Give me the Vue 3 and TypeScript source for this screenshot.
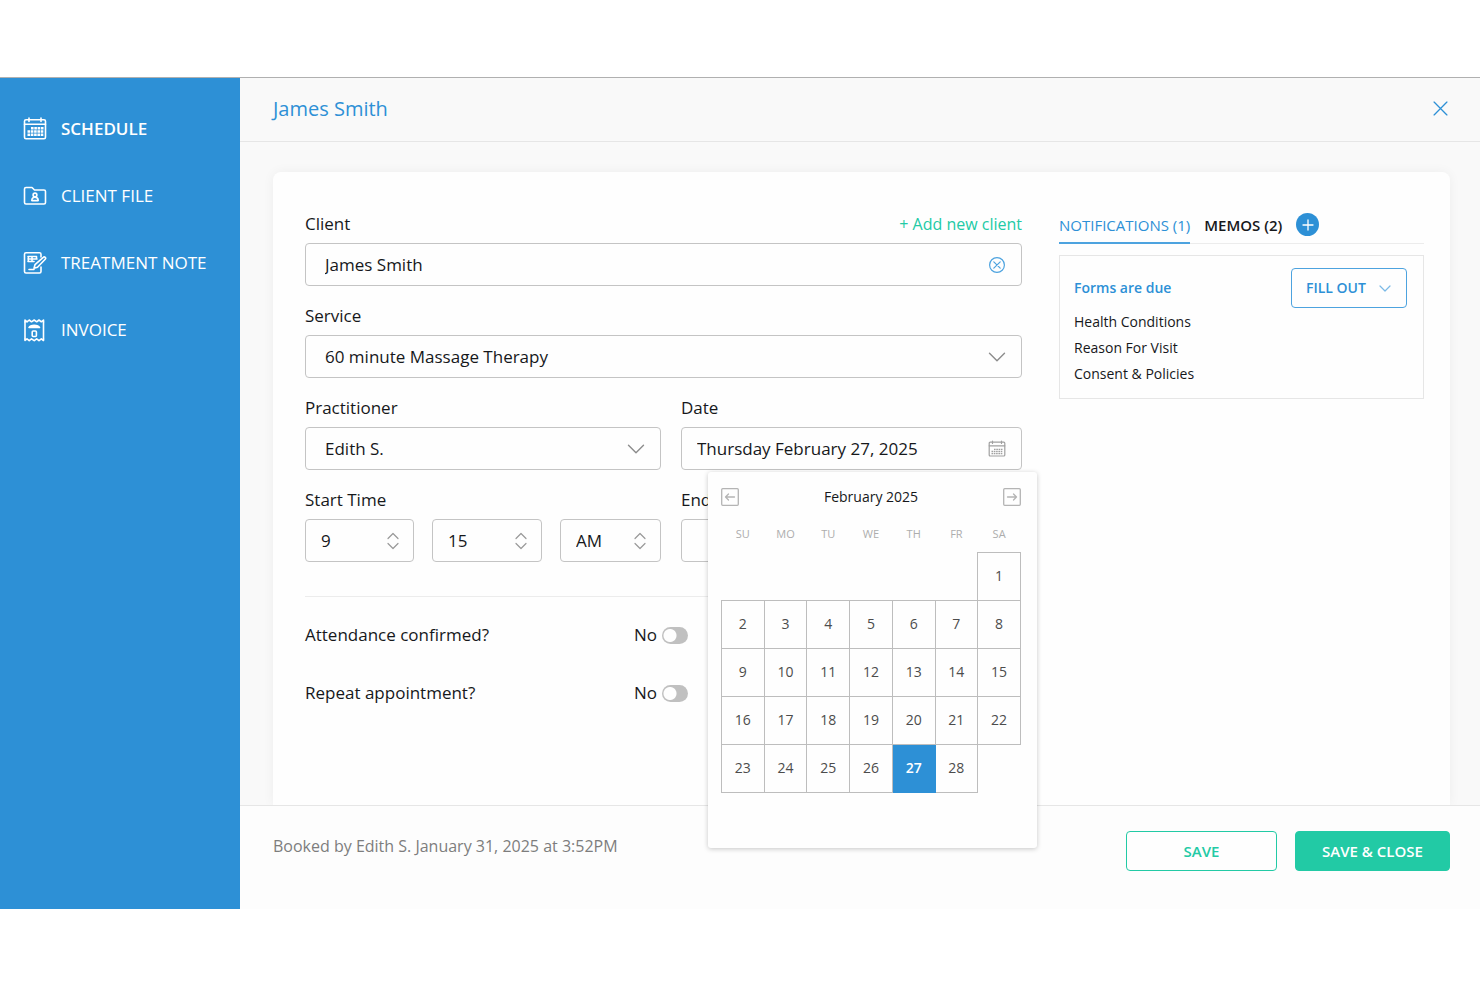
<script setup lang="ts">
import { ref } from 'vue'

interface NavItem {
  id: string
  label: string
  active: boolean
}

interface Question {
  id: string
  label: string
}

const nav: NavItem[] = [
  { id: 'schedule', label: 'SCHEDULE', active: true },
  { id: 'client', label: 'CLIENT FILE', active: false },
  { id: 'note', label: 'TREATMENT NOTE', active: false },
  { id: 'invoice', label: 'INVOICE', active: false },
]

const clientName = ref('James Smith')
const date = ref('Thursday February 27, 2025')

const start = [
  { id: 'start-hour', name: 'Start hour', value: '9' },
  { id: 'start-minute', name: 'Start minute', value: '15' },
  { id: 'start-period', name: 'Start AM or PM', value: 'AM' },
]
const end = [
  { id: 'end-hour', name: 'End hour', value: '' },
  { id: 'end-minute', name: 'End minute', value: '' },
  { id: 'end-period', name: 'End AM or PM', value: '' },
]

const questions: Question[] = [
  { id: 'attendance', label: 'Attendance confirmed?' },
  { id: 'repeat', label: 'Repeat appointment?' },
]
const answers = ref<Record<string, boolean>>({ attendance: false, repeat: false })

const forms = ['Health Conditions', 'Reason For Visit', 'Consent & Policies']

const weekdays = ['SU', 'MO', 'TU', 'WE', 'TH', 'FR', 'SA']
const firstWeekday = 6
const daysInMonth = 28
const selected = ref(27)
const weeks: (number | null)[][] = Array.from({ length: 5 }, (_, w) =>
  Array.from({ length: 7 }, (_, d) => {
    const n = w * 7 + d - firstWeekday + 1
    return n >= 1 && n <= daysInMonth ? n : null
  }),
)
</script>

<template>
  <div class="page">
    <div class="modal">
      <nav class="sidebar" aria-label="Appointment sections">
        <a v-for="item in nav" :key="item.id" href="#" class="nav-item" :class="{ active: item.active }">
          <svg class="nav-icon" viewBox="0 0 24 24" aria-hidden="true">
            <g v-if="item.id === 'schedule'">
              <rect x="1.500" y="2.800" width="21" height="19" rx="1.500" />
              <path d="M1.500 7.200h21M6 1v3.500M18 1v3.500" />
              <path class="dots" d="M8 11.300h12.500M4.500 14.500h16M4.500 17.700h16" />
            </g>
            <g v-else-if="item.id === 'client'">
              <path d="M1.500 18.500V5A1.500 1.500 0 0 1 3 3.500h6L11.500 6H21a1.500 1.500 0 0 1 1.500 1.500v11A1.500 1.500 0 0 1 21 20H3a1.500 1.500 0 0 1-1.500-1.500z" />
              <circle cx="12" cy="11" r="1.900" />
              <path d="M8.800 16.600c0-2.200 1.200-3.300 3.200-3.300s3.200 1.100 3.200 3.300z" />
            </g>
            <g v-else-if="item.id === 'note'">
              <path d="M18 6V3.200a1.500 1.500 0 0 0-1.500-1.500H3a1.500 1.500 0 0 0-1.500 1.500v17.300A1.500 1.500 0 0 0 3 22h13.500a1.500 1.500 0 0 0 1.500-1.500V16" />
              <path d="M5 5.500h8.500M5 8h9M5 10.500h6M5.300 5.500v5M9 5.500v5M13.500 5.500V8M6 18.500h5" />
              <path d="M11 17.200l1-3.500L20.300 6.400a1.300 1.300 0 0 1 1.900 1.900L14.500 16.200z" />
            </g>
            <g v-else>
              <path d="M2 4v17M20.500 4v17" />
              <path d="M2 4V2l2 1.800L6.200 2l2.300 1.800L11.200 2l2.500 1.800L16 2l2.300 1.800L20.500 2v2M2 21v1.500L4 20.800l2.200 1.800 2.300-1.800 2.700 1.800 2.500-1.800 2.300 1.800 2.300-1.800 2.200 1.700V21" />
              <path class="solid" d="M6 9.500c.8-1.600 2.700-2.300 5.200-2.300s4.500.7 5.300 2.300z" />
              <rect x="9.200" y="13" width="4.200" height="5.500" rx="1" />
            </g>
          </svg>
          <span>{{ item.label }}</span>
        </a>
      </nav>

      <div class="workspace">
        <header class="topbar">
          <h1>James Smith</h1>
          <button type="button" class="icon-btn" aria-label="Close">
            <svg class="close-icon" viewBox="0 0 14 14" aria-hidden="true"><path d="M1 1l12 12M13 1L1 13" /></svg>
          </button>
        </header>

        <main class="content">
          <div class="card">
            <form class="form" @submit.prevent>
              <div class="field">
                <div class="label-row">
                  <label for="client">Client</label>
                  <a href="#" class="add-link">+ Add new client</a>
                </div>
                <div class="control">
                  <input id="client" v-model="clientName" type="text" />
                  <button type="button" class="icon-btn trailing" aria-label="Clear client" @click="clientName = ''">
                    <svg class="clear-icon" viewBox="0 0 18 18" aria-hidden="true">
                      <circle cx="9" cy="9" r="7.400" />
                      <path d="M5.800 5.800l6.400 6.400M12.200 5.800l-6.400 6.400" />
                    </svg>
                  </button>
                </div>
              </div>

              <div class="field">
                <label for="service">Service</label>
                <div class="control">
                  <select id="service"><option>60 minute Massage Therapy</option></select>
                  <svg class="chevron trailing" viewBox="0 0 18 18" aria-hidden="true"><path d="M1.500 5.200L9 12.800l7.500-7.600" /></svg>
                </div>
              </div>

              <div class="pair">
                <div class="field">
                  <label for="practitioner">Practitioner</label>
                  <div class="control">
                    <select id="practitioner"><option>Edith S.</option></select>
                    <svg class="chevron trailing" viewBox="0 0 18 18" aria-hidden="true"><path d="M1.500 5.200L9 12.800l7.500-7.600" /></svg>
                  </div>
                </div>

                <div class="field">
                  <label for="date">Date</label>
                  <div class="control narrow">
                    <input id="date" v-model="date" type="text" />
                    <svg class="date-icon trailing" viewBox="0 0 18 18" aria-hidden="true">
                      <rect x="1.200" y="2.200" width="15.600" height="13.800" rx="1" />
                      <path d="M1.200 5.800h15.600M4.500 1v2.500M13.500 1v2.500" />
                      <path class="dots" d="M6 9.300h8.500M3.500 11.500h11M3.500 13.700h11" />
                    </svg>

                    <div class="datepicker" role="dialog" aria-label="Choose date">
                      <div class="picker-head">
                        <button type="button" class="icon-btn" aria-label="Previous month">
                          <svg class="step-icon" viewBox="0 0 18 18" aria-hidden="true">
                            <rect x="0.700" y="0.700" width="16.600" height="16.600" rx="1" />
                            <path d="M13.500 9h-9M7.500 6L4.500 9l3 3" />
                          </svg>
                        </button>
                        <span>February 2025</span>
                        <button type="button" class="icon-btn" aria-label="Next month">
                          <svg class="step-icon" viewBox="0 0 18 18" aria-hidden="true">
                            <rect x="0.700" y="0.700" width="16.600" height="16.600" rx="1" />
                            <path d="M4.500 9h9M10.500 6l3 3-3 3" />
                          </svg>
                        </button>
                      </div>
                      <table>
                        <thead>
                          <tr><th v-for="d in weekdays" :key="d" scope="col">{{ d }}</th></tr>
                        </thead>
                        <tbody>
                          <tr v-for="(week, w) in weeks" :key="w">
                            <td v-for="(day, d) in week" :key="d" :class="{ filled: day, chosen: day === selected }">
                              <button v-if="day" type="button" @click="selected = day">{{ day }}</button>
                            </td>
                          </tr>
                        </tbody>
                      </table>
                    </div>
                  </div>
                </div>
              </div>

              <div class="pair">
                <fieldset v-for="group in [{ title: 'Start Time', parts: start }, { title: 'End Time', parts: end }]" :key="group.title" class="field">
                  <legend>{{ group.title }}</legend>
                  <div class="times">
                    <div v-for="part in group.parts" :key="part.id" class="control narrow">
                      <select :id="part.id" :aria-label="part.name"><option>{{ part.value }}</option></select>
                      <svg class="updown" viewBox="0 0 12 18" aria-hidden="true"><path d="M1 6.500l5-5 5 5M1 11.500l5 5 5-5" /></svg>
                    </div>
                  </div>
                </fieldset>
              </div>

              <div class="questions">
                <label v-for="q in questions" :key="q.id" class="question" :for="q.id">
                  <span>{{ q.label }}</span>
                  <span class="answer">
                    {{ answers[q.id] ? 'Yes' : 'No' }}
                    <input :id="q.id" v-model="answers[q.id]" type="checkbox" role="switch" class="switch" />
                  </span>
                </label>
              </div>
            </form>

            <aside class="side">
              <div class="tabs" role="tablist">
                <button type="button" role="tab" aria-selected="true" class="tab current">NOTIFICATIONS (1)</button>
                <button type="button" role="tab" aria-selected="false" class="tab">MEMOS (2)</button>
                <button type="button" class="add-btn" aria-label="Add memo">
                  <svg viewBox="0 0 12 12" aria-hidden="true"><path d="M6 1v10M1 6h10" /></svg>
                </button>
              </div>
              <section class="notice">
                <div>
                  <h2>Forms are due</h2>
                  <ul>
                    <li v-for="f in forms" :key="f">{{ f }}</li>
                  </ul>
                </div>
                <button type="button" class="fill-btn">
                  FILL OUT
                  <svg viewBox="0 0 12 12" aria-hidden="true"><path d="M1 4l5 5 5-5" /></svg>
                </button>
              </section>
            </aside>
          </div>
        </main>

        <footer class="footer">
          <p>Booked by Edith S. January 31, 2025 at 3:52PM</p>
          <button type="button" class="btn outline">SAVE</button>
          <button type="button" class="btn primary">SAVE &amp; CLOSE</button>
        </footer>
      </div>
    </div>
  </div>
</template>

<style>
body {
  margin: 0;
  background: #fff;
}
</style>

<style scoped>
* {
  box-sizing: border-box;
}

.page {
  --blue: #2d90d6;
  --green: #22caa5;
  min-height: 100vh;
  padding: 77px 0 78px;
  display: flex;
  font: 17px/24px "Open Sans", "Noto Sans", sans-serif;
  color: #16181b;
}

button,
input,
select {
  font: inherit;
  color: inherit;
}

button {
  cursor: pointer;
}

svg {
  display: block;
  fill: none;
  stroke: currentColor;
  stroke-linecap: round;
  stroke-linejoin: round;
}

a {
  text-decoration: none;
}

.modal {
  flex: 1;
  display: flex;
  border-top: 1px solid #b0b0b0;
}

.sidebar {
  flex: 0 0 240px;
  padding-top: 17px;
  background: var(--blue);
}

.nav-item {
  display: flex;
  align-items: center;
  gap: 14px;
  height: 67px;
  padding-left: 23px;
  color: #fff;
}

.nav-item.active {
  font-weight: 600;
}

.nav-icon {
  width: 24px;
  height: 24px;
  stroke-width: 1.6;
}

.nav-icon .dots {
  stroke-width: 2.4;
  stroke-linecap: butt;
  stroke-dasharray: 2.6 0.7;
}

.nav-icon .solid {
  fill: currentColor;
}

.workspace {
  flex: 1;
  min-width: 0;
  display: flex;
  flex-direction: column;
}

.topbar {
  display: flex;
  align-items: center;
  justify-content: space-between;
  height: 64px;
  padding: 0 32px 2px 33px;
  background: #f9f9f9;
  border-bottom: 1px solid #e6e6e6;
  color: var(--blue);
}

h1 {
  margin: 0;
  font-size: 20px;
  font-weight: 400;
  line-height: 28px;
}

.icon-btn {
  display: block;
  padding: 0;
  border: 0;
  background: none;
}

.close-icon {
  width: 15px;
  height: 15px;
  stroke-width: 1.2;
}

.content {
  flex: 1;
  display: flex;
  padding: 30px 30px 0 33px;
  background: #f9f9f9;
}

.card {
  flex: 1;
  display: grid;
  grid-template-columns: 717fr 365fr;
  align-items: start;
  gap: 37px;
  padding: 40px 26px 0 32px;
  background: #fefefe;
  border-radius: 8px 8px 0 0;
  box-shadow: 0 0 12px rgba(0, 0, 0, 0.05);
}

.form {
  display: flex;
  flex-direction: column;
  gap: 18px;
}

.field {
  display: flex;
  flex-direction: column;
  gap: 7px;
  min-width: 0;
  margin: 0;
  padding: 0;
  border: 0;
}

legend {
  padding: 0;
  margin-bottom: 7px;
}

.label-row {
  display: flex;
  justify-content: space-between;
}

.add-link {
  color: var(--green);
  font-size: 16px;
}

.pair {
  display: grid;
  grid-template-columns: 356fr 341fr;
  gap: 20px;
}

.times {
  display: grid;
  grid-template-columns: 109fr 110fr 101fr;
  gap: 18px;
}

.control {
  position: relative;
  min-width: 0;
}

.control > input,
.control > select {
  display: block;
  width: 100%;
  height: 43px;
  padding: 0 44px 0 19px;
  border: 1px solid #c4c4c4;
  border-radius: 4px;
  background: #fefefe;
  appearance: none;
  outline: none;
}

.control.narrow > input,
.control.narrow > select {
  padding-left: 15px;
}

.control > .trailing {
  position: absolute;
  top: 13px;
  right: 16px;
}

.clear-icon,
.chevron,
.date-icon {
  width: 18px;
  height: 18px;
}

.clear-icon {
  color: #4da3df;
  stroke-width: 1.2;
}

.chevron {
  color: #8c8c8c;
  stroke-width: 1.4;
  pointer-events: none;
}

.date-icon {
  color: #a0a0a0;
  stroke-width: 1.2;
}

.date-icon .dots {
  stroke-width: 1.3;
  stroke-linecap: butt;
  stroke-dasharray: 1.6 0.7;
}

.updown {
  position: absolute;
  top: 13px;
  right: 15px;
  width: 12px;
  height: 18px;
  color: #999;
  stroke-width: 1.2;
  pointer-events: none;
}

.datepicker {
  position: absolute;
  z-index: 5;
  top: 45px;
  right: -15px;
  width: 329px;
  padding: 15px 16px 55px 13px;
  background: #fefefe;
  border-radius: 3px;
  box-shadow: 0 1px 5px rgba(0, 0, 0, 0.22);
}

.picker-head {
  display: flex;
  align-items: center;
  justify-content: space-between;
  height: 20px;
  font-size: 14px;
}

.step-icon {
  width: 18px;
  height: 18px;
  color: #b4b4b4;
  stroke-width: 1.3;
}

table {
  width: 100%;
  margin-top: 9px;
  table-layout: fixed;
  border-collapse: collapse;
}

th {
  height: 36px;
  padding: 0;
  color: #adadad;
  font-size: 11px;
  font-weight: 400;
  line-height: 20px;
  vertical-align: middle;
}

td {
  height: 48px;
  padding: 0;
}

td.filled {
  border: 1px solid #bdbdbd;
}

td button {
  display: block;
  width: 100%;
  height: 47px;
  padding: 0;
  border: 0;
  background: none;
  color: #4c4c4c;
  font-size: 14px;
}

td.chosen {
  background: var(--blue);
  border-color: var(--blue);
}

td.chosen button {
  color: #fff;
  font-weight: 600;
}

.questions {
  display: flex;
  flex-direction: column;
  gap: 34px;
  margin-top: 16px;
  padding-top: 26px;
  border-top: 1px solid #ececec;
}

.question {
  display: flex;
  align-items: center;
  justify-content: space-between;
  width: 383px;
}

.answer {
  display: flex;
  align-items: center;
  gap: 5px;
}

.switch {
  appearance: none;
  width: 26px;
  height: 17px;
  margin: 0;
  border-radius: 9px;
  background: radial-gradient(circle at 8px 50%, #fefefe 6px, #c0c0c0 7px);
}

.switch:checked {
  background: radial-gradient(circle at 18px 50%, #fefefe 6px, var(--green) 7px);
}

.tabs {
  display: flex;
  align-items: stretch;
  gap: 14px;
  height: 32px;
  border-bottom: 1px solid #ececec;
}

.tab {
  padding: 0 0 5px;
  border: 0;
  background: none;
  font-size: 15px;
  font-weight: 600;
  line-height: 20px;
  white-space: nowrap;
}

.tab.current {
  margin-bottom: -1px;
  border-bottom: 2px solid #4da3df;
  color: var(--blue);
  font-weight: 400;
}

.add-btn {
  display: grid;
  place-items: center;
  width: 23px;
  height: 23px;
  margin-top: 1px;
  padding: 0;
  border: 0;
  border-radius: 50%;
  background: var(--blue);
  color: #fff;
}

.add-btn svg {
  width: 12px;
  height: 12px;
  stroke-width: 1.3;
}

.notice {
  display: flex;
  align-items: flex-start;
  justify-content: space-between;
  margin-top: 11px;
  padding: 12px 16px 11px 14px;
  border: 1px solid #e6e6e6;
}

h2 {
  margin: 0 0 1px;
  color: var(--blue);
  font-size: 14px;
  font-weight: 600;
  line-height: 40px;
}

ul {
  margin: 0;
  padding: 0;
  list-style: none;
  font-size: 14px;
  line-height: 26px;
}

.fill-btn {
  display: flex;
  align-items: center;
  justify-content: space-between;
  width: 116px;
  height: 40px;
  padding: 0 15px 0 14px;
  border: 1px solid #4da3df;
  border-radius: 4px;
  background: #fefefe;
  color: var(--blue);
  font-size: 14px;
  font-weight: 600;
}

.fill-btn svg {
  width: 12px;
  height: 12px;
  color: #7ab9e6;
  stroke-width: 1.2;
}

.footer {
  display: flex;
  align-items: flex-start;
  gap: 18px;
  height: 104px;
  padding: 25px 30px 0 33px;
  background: #fdfdfd;
  border-top: 1px solid #e6e6e6;
}

.footer p {
  flex: 1;
  margin: 0;
  color: #7d7d7d;
  font-size: 16px;
  line-height: 30px;
}

.btn {
  width: 155px;
  height: 40px;
  padding: 0;
  border: 1px solid var(--green);
  border-radius: 4px;
  font-size: 15px;
  font-weight: 600;
}

.btn.outline {
  width: 151px;
  background: #fefefe;
  color: var(--green);
}

.btn.primary {
  background: var(--green);
  color: #fff;
}
</style>
